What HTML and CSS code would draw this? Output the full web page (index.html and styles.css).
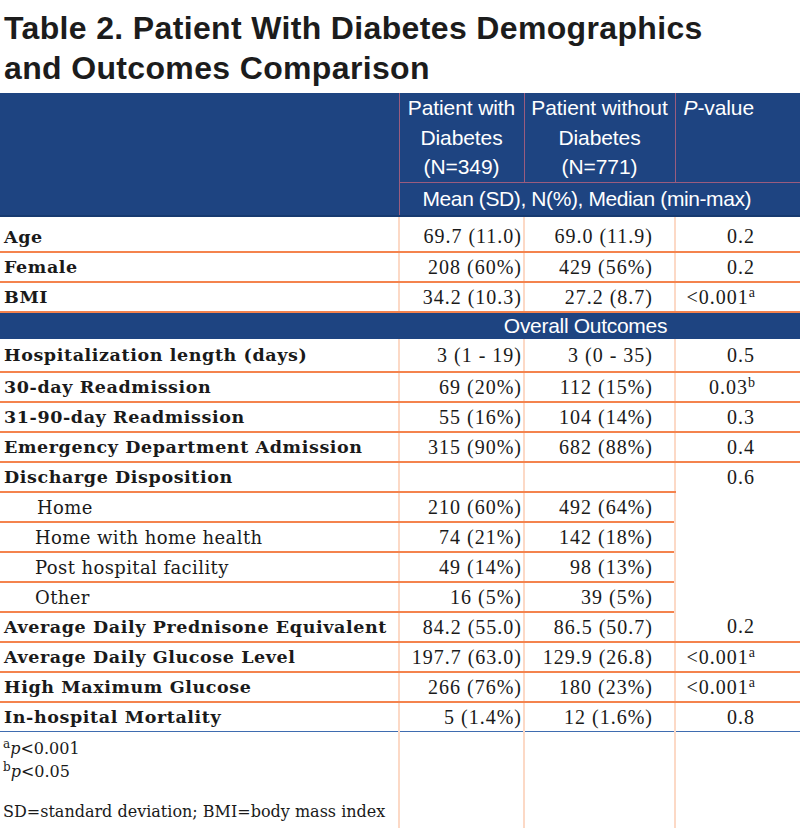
FILE: index.html
```html
<!DOCTYPE html>
<html>
<head>
<meta charset="utf-8">
<link rel="stylesheet" href="styles.css">
</head>
<body>
<h1 class="title">Table 2. Patient With Diabetes Demographics<br>and Outcomes Comparison</h1>
<table class="tbl">
  <colgroup>
    <col class="c0"><col class="c1"><col class="c2"><col class="c3">
  </colgroup>
  <thead>
    <tr class="h1">
      <th class="hblank" rowspan="2"></th>
      <th class="hcol">Patient with<br>Diabetes<br>(N=349)</th>
      <th class="hcol">Patient without<br>Diabetes<br>(N=771)</th>
      <th class="hcol hp"><i>P</i>-value</th>
    </tr>
    <tr class="h2">
      <th class="hspan" colspan="3">Mean (SD), N(%), Median (min-max)</th>
    </tr>
  </thead>
  <tbody>
    <tr class="r first"><td class="lab">Age</td><td class="n1">69.7 (11.0)</td><td class="n2">69.0 (11.9)</td><td class="np">0.2</td></tr>
    <tr class="r"><td class="lab">Female</td><td class="n1">208 (60%)</td><td class="n2">429 (56%)</td><td class="np">0.2</td></tr>
    <tr class="r"><td class="lab">BMI</td><td class="n1">34.2 (10.3)</td><td class="n2">27.2 (8.7)</td><td class="np">&lt;0.001<sup>a</sup></td></tr>
    <tr class="sec"><td></td><td colspan="3" class="sectxt">Overall Outcomes</td></tr>
    <tr class="r tall"><td class="lab">Hospitalization length (days)</td><td class="n1">3 (1 - 19)</td><td class="n2">3 (0 - 35)</td><td class="np">0.5</td></tr>
    <tr class="r"><td class="lab">30-day Readmission</td><td class="n1">69 (20%)</td><td class="n2">112 (15%)</td><td class="np">0.03<sup>b</sup></td></tr>
    <tr class="r"><td class="lab">31-90-day Readmission</td><td class="n1">55 (16%)</td><td class="n2">104 (14%)</td><td class="np">0.3</td></tr>
    <tr class="r"><td class="lab">Emergency Department Admission</td><td class="n1">315 (90%)</td><td class="n2">682 (88%)</td><td class="np">0.4</td></tr>
    <tr class="r"><td class="lab">Discharge Disposition</td><td class="n1"></td><td class="n2"></td><td class="np span" rowspan="5">0.6</td></tr>
    <tr class="r"><td class="sub sub-home">Home</td><td class="n1">210 (60%)</td><td class="n2">492 (64%)</td></tr>
    <tr class="r"><td class="sub">Home with home health</td><td class="n1">74 (21%)</td><td class="n2">142 (18%)</td></tr>
    <tr class="r"><td class="sub">Post hospital facility</td><td class="n1">49 (14%)</td><td class="n2">98 (13%)</td></tr>
    <tr class="r"><td class="sub">Other</td><td class="n1">16 (5%)</td><td class="n2">39 (5%)</td></tr>
    <tr class="r"><td class="lab">Average Daily Prednisone Equivalent</td><td class="n1">84.2 (55.0)</td><td class="n2">86.5 (50.7)</td><td class="np">0.2</td></tr>
    <tr class="r"><td class="lab">Average Daily Glucose Level</td><td class="n1">197.7 (63.0)</td><td class="n2">129.9 (26.8)</td><td class="np">&lt;0.001<sup>a</sup></td></tr>
    <tr class="r"><td class="lab">High Maximum Glucose</td><td class="n1">266 (76%)</td><td class="n2">180 (23%)</td><td class="np">&lt;0.001<sup>a</sup></td></tr>
    <tr class="r last"><td class="lab">In-hospital Mortality</td><td class="n1">5 (1.4%)</td><td class="n2">12 (1.6%)</td><td class="np">0.8</td></tr>
    <tr class="foot">
      <td class="notes">
        <p class="fn"><sup>a</sup><i>p</i>&lt;0.001<br><sup>b</sup><i>p</i>&lt;0.05</p>
        <p class="fn2">SD=standard deviation; BMI=body mass index</p>
      </td>
      <td class="n1"></td><td class="n2"></td><td class="np"></td>
    </tr>
  </tbody>
</table>
</body>
</html>
```

FILE: styles.css
```css
html, body {
  margin: 0;
  padding: 0;
  background: #ffffff;
}
body {
  width: 800px;
  height: 828px;
  overflow: hidden;
}
.title {
  margin: 0;
  padding: 8px 0 0 4px;
  height: 85px;
  box-sizing: border-box;
  font-family: "Liberation Sans", Arial, sans-serif;
  font-weight: bold;
  font-size: 32px;
  line-height: 40px;
  letter-spacing: 0.35px;
  color: #1c1c1c;
}
.tbl {
  margin-top: 8px;
  width: 800px;
  border-collapse: collapse;
  table-layout: fixed;
}
.c0 { width: 399px; }
.c1 { width: 125px; }
.c2 { width: 151px; }
.c3 { width: 125px; }

thead th {
  background: #1e4481;
  color: #ffffff;
  font-family: "Liberation Sans", Arial, sans-serif;
  font-weight: normal;
  font-size: 21px;
  letter-spacing: -0.1px;
  padding: 0;
}
.h1 th {
  height: 89px;
  line-height: 29.5px;
  vertical-align: top;
  text-align: center;
}
.hblank {
  border-right: 1px solid #9a5c7e;
  border-bottom: 2px solid #173a70;
}
.h1 .hcol {
  border-left: 1px solid #9a5c7e;
  border-bottom: 1px solid #9a5c7e;
}
.h1 .hp {
  text-align: left;
  padding-left: 8px;
}
.hspan {
  height: 32px;
  line-height: 32px;
  text-align: left;
  letter-spacing: -0.4px !important;
  padding-left: 23px !important;
  border-bottom: 2px solid #173a70;
}

tbody td {
  padding: 0;
  height: 28px;
  vertical-align: middle;
  white-space: nowrap;
}
.r td {
  border-bottom: 2px solid #f4834e;
}
.r.first td {
  height: 36px;
  padding-top: 5px;
  box-sizing: border-box;
}
.r.tall td {
  height: 32px;
}
.r.last td {
  border-bottom: 1px solid #3f6cb0;
}
.lab {
  font-family: "DejaVu Serif", serif;
  font-weight: bold;
  font-size: 17.5px;
  letter-spacing: 0.6px;
  color: #1a1a1a;
  padding-left: 4px !important;
}
.sub {
  font-family: "DejaVu Serif", serif;
  font-size: 18px;
  letter-spacing: 0.4px;
  color: #1a1a1a;
  padding-left: 35px !important;
}
.sub-home {
  padding-left: 37px !important;
}
.n1, .n2, .np {
  font-family: "Liberation Serif", "Times New Roman", serif;
  font-size: 20px;
  letter-spacing: 1px;
  color: #1a1a1a;
  text-align: right;
  border-left: 2px solid #fcd9c6;
}
.n1 { padding-right: 1px !important; }
.n2 { padding-right: 21px !important; }
.np { padding-right: 45px !important; }
.np.span {
  vertical-align: top;
  padding-top: 3px !important;
  border-bottom: none;
}
sup {
  font-size: 14px;
  line-height: 0;
  vertical-align: 7px;
  letter-spacing: 0;
}
.sec td {
  background: #1e4481;
  height: 26px;
  border-bottom: none;
}
.sectxt {
  color: #ffffff;
  font-family: "Liberation Sans", Arial, sans-serif;
  font-size: 21px;
  letter-spacing: -0.3px;
  text-align: center;
  padding-right: 28px !important;
}
.foot td {
  height: 96px;
  vertical-align: top;
  border-bottom: none;
}
.notes {
  font-family: "DejaVu Serif", serif;
  font-size: 16px;
  color: #1a1a1a;
  padding-left: 3px !important;
}
.fn {
  margin: 5px 0 0 0;
  line-height: 23px;
}
.fn sup {
  font-size: 12px;
  vertical-align: 6px;
}
.fn2 {
  margin: 17px 0 0 0;
  line-height: 23px;
}
```
